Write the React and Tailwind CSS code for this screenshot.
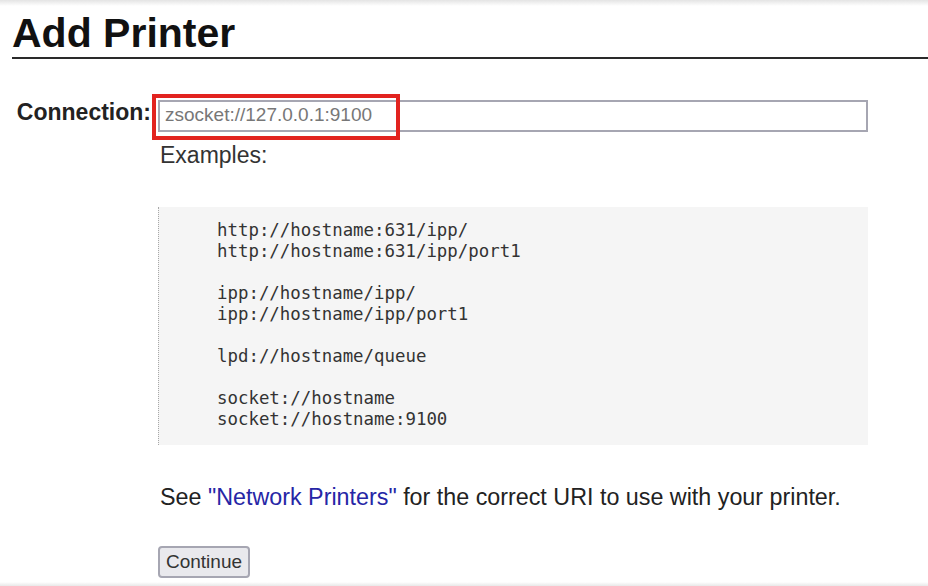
import React from 'react'

const examples = [
  'http://hostname:631/ipp/',
  'http://hostname:631/ipp/port1',
  '',
  'ipp://hostname/ipp/',
  'ipp://hostname/ipp/port1',
  '',
  'lpd://hostname/queue',
  '',
  'socket://hostname',
  'socket://hostname:9100',
]

const App = () => {
  return (
    <div className="h-[586px] flex flex-col bg-white font-['Liberation_Sans',Arial,sans-serif] text-[#222] overflow-hidden">
      <div className="h-[6px] bg-linear-to-b from-[#e4e4e4] to-white" />
      <main className="flex-1 pl-[12px]">
        <h1 className="mt-[4px] text-[41px] leading-[46px] font-bold text-[#111]">Add Printer</h1>
        <div className="mt-[1px] border-t-2 border-[#2a2a2a]" />

        <div className="mt-[41px] grid grid-cols-[146px_1fr]">
          <label className="pr-[7px] text-right text-[23px] leading-[24px] font-bold">Connection:</label>
          <div>
            <div className="relative w-[710px]">
              <input
                readOnly
                value="zsocket://127.0.0.1:9100"
                className="block w-[710px] h-[32px] px-[5px] pb-[3px] border-2 border-[#a6a6b2] bg-white text-[19px] text-[#777] outline-none"
              />
              <div className="absolute left-[-6px] top-[-6px] w-[248px] h-[46px] border-4 border-[#e2231f] pointer-events-none" />
            </div>

            <p className="mt-[10px] pl-[2px] text-[23px] leading-[26px] text-[#333]">Examples:</p>

            <pre className="mt-[39px] w-[710px] pt-[13px] pb-[15px] pl-[58px] bg-[#f5f5f5] border-l border-dotted border-[#a8a8a8] font-['DejaVu_Sans_Mono',monospace] text-[17.4px] leading-[21px] text-[#333]">
              {examples.map((line, i) => (
                <div key={i} className="h-[21px]">{line}</div>
              ))}
            </pre>

            <p className="mt-[39px] pl-[2px] text-[23.3px] leading-[26px] text-[#222]">
              See <a href="#" className="text-[#2626a6]">"Network Printers"</a> for the correct URI to use with your printer.
            </p>

            <button className="mt-[36px] w-[92px] h-[32px] bg-[#e9e9ed] border-2 border-[#a6a6b2] rounded-[4px] text-[19px] text-[#333]">
              Continue
            </button>
          </div>
        </div>
      </main>
      <div className="h-[4px] bg-linear-to-b from-white to-[#e8e8e8]" />
    </div>
  )
}

export default App
